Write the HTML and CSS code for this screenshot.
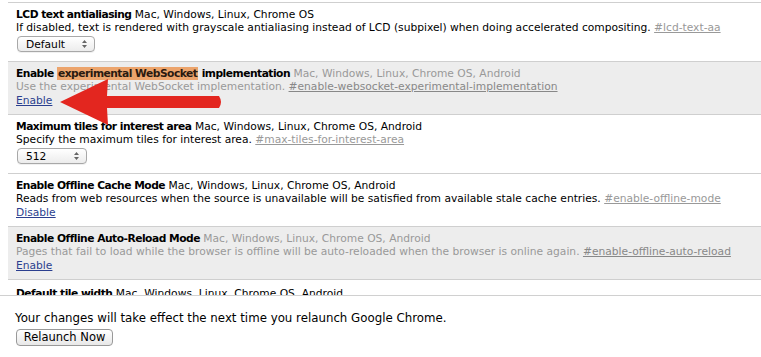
FILE: index.html
```html
<!DOCTYPE html>
<html lang="en">
<head>
    <meta charset="UTF-8">
    <meta name="viewport" content="width=device-width, initial-scale=1.0">
    <title>Experiments</title>
    <link rel="stylesheet" href="styles.css">
</head>
<body>
    <div class="page">
        <div class="experiments">
            <div class="experiment">
                <div class="title"><b>LCD text antialiasing</b> Mac, Windows, Linux, Chrome OS</div>
                <div class="desc">If disabled, text is rendered with grayscale antialiasing instead of LCD (subpixel) when doing accelerated compositing. <a class="permalink">#lcd-text-aa</a></div>
                <div class="select select-wide">
                    <span>Default</span>
                    <svg class="spin" width="5" height="8" viewBox="0 0 5 8"><path d="M2.5 0 L5 3 L0 3 Z M0 5 L5 5 L2.5 8 Z" fill="#666"/></svg>
                </div>
            </div>

            <div class="experiment disabled">
                <div class="title"><b>Enable <mark>experimental WebSocket</mark> implementation</b> Mac, Windows, Linux, Chrome OS, Android</div>
                <div class="desc">Use the experimental WebSocket implementation. <a class="permalink">#enable-websocket-experimental-implementation</a></div>
                <a class="action">Enable</a>
            </div>

            <div class="experiment">
                <div class="title"><b>Maximum tiles for interest area</b> Mac, Windows, Linux, Chrome OS, Android</div>
                <div class="desc">Specify the maximum tiles for interest area. <a class="permalink">#max-tiles-for-interest-area</a></div>
                <div class="select">
                    <span>512</span>
                    <svg class="spin" width="5" height="8" viewBox="0 0 5 8"><path d="M2.5 0 L5 3 L0 3 Z M0 5 L5 5 L2.5 8 Z" fill="#666"/></svg>
                </div>
            </div>

            <div class="experiment">
                <div class="title"><b>Enable Offline Cache Mode</b> Mac, Windows, Linux, Chrome OS, Android</div>
                <div class="desc">Reads from web resources when the source is unavailable will be satisfied from available stale cache entries. <a class="permalink">#enable-offline-mode</a></div>
                <a class="action">Disable</a>
            </div>

            <div class="experiment disabled">
                <div class="title"><b>Enable Offline Auto-Reload Mode</b> Mac, Windows, Linux, Chrome OS, Android</div>
                <div class="desc">Pages that fail to load while the browser is offline will be auto-reloaded when the browser is online again. <a class="permalink">#enable-offline-auto-reload</a></div>
                <a class="action">Enable</a>
            </div>

            <div class="experiment last">
                <div class="title"><b>Default tile width</b> Mac, Windows, Linux, Chrome OS, Android</div>
                <div class="desc">Specify the default tile width.</div>
            </div>
        </div>

        <!-- red callout arrow drawn over the list -->
        <svg class="arrow" width="240" height="140" viewBox="0 0 240 140">
            <path d="M60 102 L108 79 L107 96 L219 96 Q223 102 219 108 L107 108 L108 125 Z" fill="#e3261f"/>
        </svg>
    </div>

    <div class="restart">
        <div class="restart-text">Your changes will take effect the next time you relaunch Google Chrome.</div>
        <button class="relaunch">Relaunch Now</button>
    </div>
</body>
</html>
```

FILE: styles.css
```css
body {
    margin: 0;
    background: #fff;
    color: #000;
    font-family: "DejaVu Sans", Verdana, sans-serif;
    font-size: 10.7px;
    line-height: 13px;
    overflow: hidden;
}

.page {
    position: relative;
    height: 295px;
    overflow: hidden;
    padding-top: 2px;
    box-sizing: border-box;
}

.experiments {
    margin-left: 8px;
    border-top: 1px solid #cfcfcf;
}

.experiment {
    padding: 5px 8px 7px;
    border-bottom: 1px solid #cfcfcf;
}

.experiment.last {
    padding-top: 7px;
}

.experiment.disabled {
    background: #ededed;
    color: #999;
}

.experiment b {
    letter-spacing: -0.5px;
}

.experiment.disabled b {
    color: #000;
}

.title,
.desc {
    white-space: nowrap;
}

mark {
    background: #eca46c;
    color: #2a1a10;
    padding: 0 1px;
}

.permalink {
    color: #999;
    text-decoration: underline;
}

.disabled .permalink {
    color: #888;
}

.action {
    display: block;
    width: fit-content;
    margin-top: 1px;
    color: #2b3f8f;
    text-decoration: underline;
}

.select {
    display: flex;
    justify-content: space-between;
    align-items: center;
    width: 70px;
    height: 16px;
    margin: 2px 0 2px 1px;
    padding: 0 7px 0 8px;
    box-sizing: border-box;
    border: 1px solid #a8a8a8;
    border-radius: 4px;
    background: linear-gradient(#ffffff, #ececec);
    box-shadow: 0 1px 0 rgba(0, 0, 0, 0.06);
}

.select-wide {
    width: 78px;
}

.arrow {
    position: absolute;
    left: 0;
    top: 0;
}

.restart {
    border-top: 1px solid #d0d0d0;
    padding: 14px 15px 0;
}

.restart-text {
    font-size: 11.8px;
    line-height: 16px;
}

.relaunch {
    display: block;
    margin: 3px 0 0 1px;
    width: 97px;
    height: 17px;
    padding: 0;
    font-family: "DejaVu Sans", Verdana, sans-serif;
    font-size: 11.5px;
    line-height: 15px;
    color: #000;
    border: 1px solid #999;
    border-radius: 4px;
    background: linear-gradient(#ffffff, #e8e8e8);
}
```
